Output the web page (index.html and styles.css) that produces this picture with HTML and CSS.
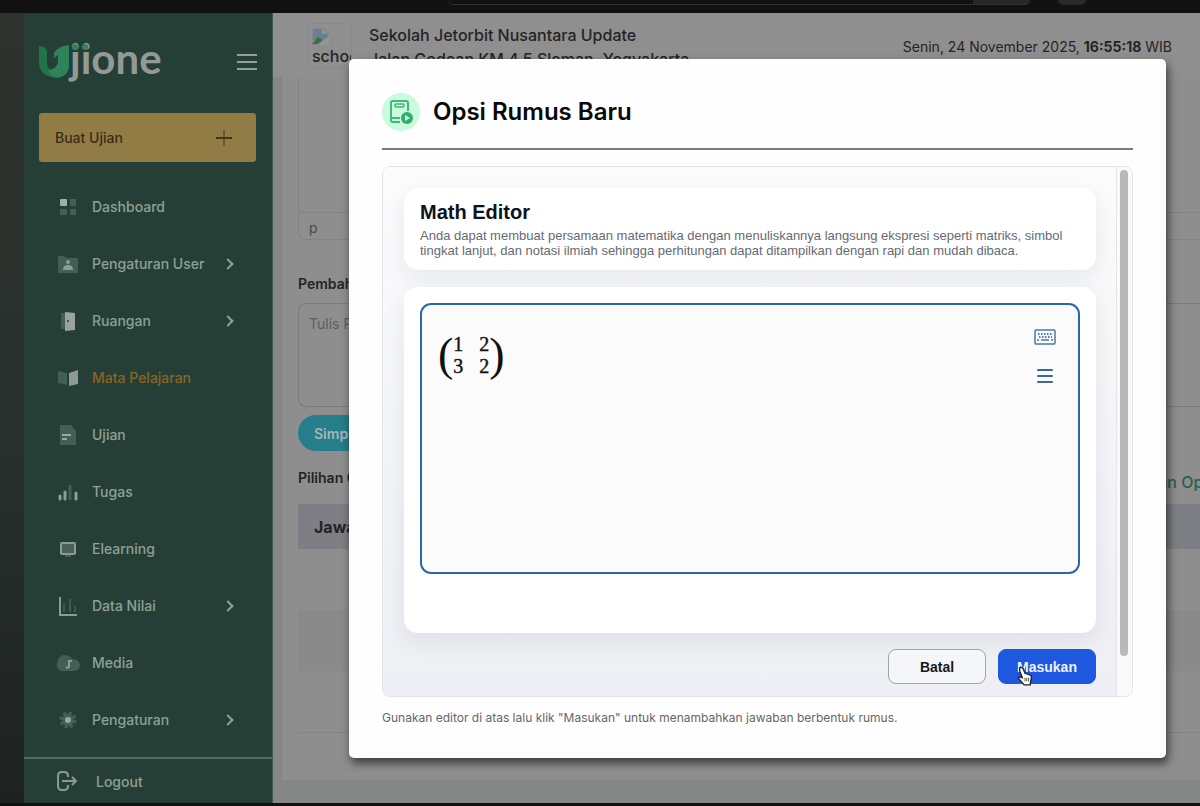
FILE: index.html
```html
<!DOCTYPE html>
<html lang="id">
<head>
  <meta charset="UTF-8" />
  <meta name="viewport" content="width=device-width, initial-scale=1.0" />
  <title>Ujione - Opsi Rumus Baru</title>
  <link rel="stylesheet" href="styles.css">
</head>
<body>
  <div class="browser-bar">
    <div class="address"></div>
    <div class="avatar"></div>
  </div>

  <div class="layout">
    <aside class="sidebar">
      <div class="brand">
        <svg class="logo" width="128" height="44" viewBox="0 0 128 44" role="img" aria-label="Ujione">
          <path d="M0 6q7 0 8 6v11q0 6 6 8l6 5q-4 2-8 1Q0 34 0 22z" fill="#21744a"/>
          <path d="M15 13q4-7 15-8v20q0 11-12 13-8-2-9-8 9-1 10-8v-7l-4 3z" fill="#2f8259"/>
          <text x="31" y="34" class="logo-text">jione</text>
          <circle cx="36" cy="7" r="3" fill="#2f8259"/>
          <circle cx="46" cy="7" r="3" fill="#2f8259"/>
        </svg>
        <button class="toggle" aria-label="Menu">
          <svg width="20" height="18" viewBox="0 0 20 18" stroke="#92a099" stroke-width="2"><path d="M0 2h20M0 9h20M0 16h20"/></svg>
        </button>
      </div>

      <button class="create">Buat Ujian
        <svg width="16" height="16" viewBox="0 0 16 16" stroke="#43341a" stroke-width="2"><path d="M0 8h16"/><path d="M8 0v16" stroke-width="1"/></svg>
      </button>

      <nav class="menu">
        <a href="#"><svg viewBox="0 0 24 24"><rect x="4" y="4" width="7" height="7" rx="1" fill="#a3ada8"/><path class="dim" d="M14 4h6v7h-6zM4 14h7v6H4zM14 14h6v6h-6z"/></svg>Dashboard</a>
        <a href="#"><svg viewBox="0 0 24 24"><path class="dim" d="M2 4h6l2 2h12v15H2z"/><circle cx="12" cy="10" r="2" fill="#8c9b94"/><path d="M7 18q0-5 5-5t5 5z" fill="#8c9b94"/></svg>Pengaturan User<i class="chevron"></i></a>
        <a href="#"><svg viewBox="0 0 24 24"><path class="dim" d="M5 4h4v16H5z"/><path d="M9 3l10 1v17l-10 1z" fill="#9ca39f"/><circle cx="12" cy="12" r="1" fill="#3b2b2b"/></svg>Ruangan<i class="chevron"></i></a>
        <a href="#" class="active"><svg viewBox="0 0 24 24"><path class="dim" d="M2 5l9 2v12l-9-2z"/><path d="M13 7l9-3v14l-9 2z" fill="#8e9994"/></svg>Mata Pelajaran</a>
        <a href="#"><svg viewBox="0 0 24 24"><path class="dim" d="M4 2h11l5 6v14H4z"/><path d="M6 12h9M6 16h5" stroke="#9aa7a0" stroke-width="2"/></svg>Ujian</a>
        <a href="#"><svg viewBox="0 0 24 24"><path d="M4 16v3M9 12v7M20 13v6" stroke="#8f9d96" stroke-width="3" stroke-linecap="round"/><path d="M14 5v15" stroke="#445e53" stroke-width="3"/></svg>Tugas</a>
        <a href="#"><svg viewBox="0 0 24 24"><rect x="5" y="6" width="14" height="11" rx="1" fill="#4a5f56" stroke="#8b9a93" stroke-width="2"/><path class="dim" d="M9 18h6v2H9z"/></svg>Elearning</a>
        <a href="#"><svg viewBox="0 0 24 24"><path d="M8 9v9M14 5v13M19 12v6" stroke="#3e594e" stroke-width="2"/><path d="M4 3v18h17" fill="none" stroke="#8b9a93" stroke-width="2"/></svg>Data Nilai<i class="chevron"></i></a>
        <a href="#"><svg viewBox="0 0 24 24"><path class="dim" d="M6 20a6 6 0 0 1-5-8Q2 5 8 4q6 0 8 4 7 0 8 6 0 5-6 6z"/><path d="M10 17l3-1v-6h3" fill="none" stroke="#8b9a93" stroke-width="2"/></svg>Media</a>
        <a href="#"><svg viewBox="0 0 24 24"><circle cx="12" cy="12" r="6" class="dim"/><circle cx="12" cy="12" r="7" fill="none" stroke="#455e54" stroke-width="3" stroke-dasharray="3.5 2"/><circle cx="12" cy="12" r="3" fill="#9aa7a0"/></svg>Pengaturan<i class="chevron"></i></a>
      </nav>

      <a href="#" class="logout">
        <svg width="24" height="24" viewBox="0 0 24 24" fill="none" stroke="#8b9a93" stroke-width="2"><path d="M13 8V7q0-4-4-4H7Q3 3 3 7v10q0 4 4 4h2q4 0 4-4v-1M7 12h14M17 8l4 4-4 4"/></svg>
        Logout
      </a>
    </aside>

    <main class="main">
      <header class="header">
        <div class="school-logo">
          <svg width="17" height="17" viewBox="0 0 17 17"><path d="M0 0h11l6 6v11H0z" fill="#8d9496" stroke="#7d8284"/><path d="M1 1h9v5h6v4L7 13l-6-1z" fill="#687f94"/><path d="M0 16l6-7 5 3-5 4z" fill="#3f7140"/><path d="M7 17l10-9v9z" fill="#939693"/></svg>
          <span>school</span>
        </div>
        <div class="school">
          <div>Sekolah Jetorbit Nusantara Update</div>
          <div>Jalan Godean KM 4.5 Sleman, Yogyakarta</div>
        </div>
        <div class="clock">Senin, 24 November 2025, <b>16:55:18</b> WIB</div>
      </header>

      <section class="content">
        <div class="editor"><div class="status">p</div></div>
        <label class="label" for="pembahasan">Pembahasan</label>
        <textarea id="pembahasan" placeholder="Tulis Pembahasan"></textarea>
        <button class="save">Simpan</button>
        <div class="option-head">
          <span>Pilihan Ganda</span>
          <a href="#">Tambahkan Opsi</a>
        </div>
        <table class="answers">
          <thead><tr><th>Jawaban</th></tr></thead>
          <tbody>
            <tr><td></td></tr>
            <tr><td></td></tr>
            <tr><td></td></tr>
          </tbody>
        </table>
      </section>
    </main>
  </div>

  <!-- Modal -->
  <div class="overlay">
    <div class="modal" role="dialog" aria-labelledby="modal-title">
      <div class="modal-head">
        <span class="modal-icon">
          <svg width="24" height="24" viewBox="0 0 24 24" fill="none" stroke="#43b67b" stroke-width="2"><path d="M19 11V3q0-2-2-2H4Q2 1 2 3v17q0 2 2 2h7M2 18h9"/><rect x="6" y="4" width="9" height="3" rx="1" stroke-width="1.5"/><circle cx="18" cy="18" r="6" fill="#2fae6c" stroke="none"/><path d="M16 15l5 3-5 3z" fill="#c9fbdc" stroke="none"/></svg>
        </span>
        <h2 id="modal-title">Opsi Rumus Baru</h2>
      </div>

      <div class="frame">
        <div class="frame-body">
          <div class="card intro">
            <h3>Math Editor</h3>
            <p>Anda dapat membuat persamaan matematika dengan menuliskannya langsung ekspresi seperti matriks, simbol tingkat lanjut, dan notasi ilmiah sehingga perhitungan dapat ditampilkan dengan rapi dan mudah dibaca.</p>
          </div>
          <div class="card field-card">
            <div class="mathfield">
              <div class="matrix">
                <span class="paren">(</span>
                <div class="cells"><span>1</span><span>2</span><span>3</span><span>2</span></div>
                <span class="paren">)</span>
              </div>
              <div class="tools">
                <button aria-label="Keyboard">
                  <svg width="22" height="16" viewBox="0 0 22 16" fill="none" stroke="#4d79a8"><rect x="1" y="1" width="20" height="14" rx="1" stroke-width="1.5"/><path d="M4 5h15M5 8h13" stroke-width="2" stroke-dasharray="1.5 1.5"/><path d="M3 11h2M7 11h8M17 11h2" stroke-width="1.5"/></svg>
                </button>
                <button aria-label="Menu">
                  <svg width="16" height="16" viewBox="0 0 16 16" stroke="#3b66a0" stroke-width="2" stroke-linecap="round"><path d="M1 2h14M1 8h14M1 14h14"/></svg>
                </button>
              </div>
            </div>
          </div>
          <div class="actions">
            <button class="cancel">Batal</button>
            <button class="submit">Masukan
              <svg class="cursor" width="16" height="20" viewBox="0 0 18 22"><path d="M3 2q2-2 4 1l2 5 6 2q2 1 1 4l-1 5v2H8l-6-7q-1-2 1-2l3 1-3-8z" fill="#fff" stroke="#222" stroke-width="1.5"/><path d="M9 13v4M11 13v4M13 13v4" stroke="#444"/></svg>
            </button>
          </div>
        </div>
        <div class="scrollbar"><div class="thumb"></div></div>
      </div>
      <p class="hint">Gunakan editor di atas lalu klik "Masukan" untuk menambahkan jawaban berbentuk rumus.</p>
    </div>
  </div>
</body>
</html>
```

FILE: styles.css
```css
* {
  box-sizing: border-box;
}

body {
  margin: 0;
  min-height: 100vh;
  display: flex;
  flex-direction: column;
  position: relative;
  font-family: Inter, sans-serif;
  background: #111;
  color: #242424;
  overflow: hidden;
}

button {
  font-family: inherit;
  cursor: pointer;
}

a {
  text-decoration: none;
}

.browser-bar {
  height: 13px;
  display: flex;
  gap: 28px;
  padding-left: 448px;
}

.address {
  width: 582px;
  height: 5px;
  border-bottom: 1px solid #333;
  border-radius: 0 0 12px 12px;
  background: linear-gradient(to right, #111 525px, #272727 525px);
}

.avatar {
  width: 28px;
  height: 5px;
  border-radius: 0 0 14px 14px;
  background: #292929;
}

.layout {
  flex: 1;
  display: flex;
  padding-left: 24px;
  border-bottom: 3px solid #111;
  background: linear-gradient(#2f322e, #29302d 50%, #1e2321);
}

/* Sidebar */
.sidebar {
  width: 249px;
  flex-shrink: 0;
  display: flex;
  flex-direction: column;
  background: #253f36;
  border-right: 1px solid #3d5a50;
}

.brand {
  display: flex;
  justify-content: space-between;
  align-items: center;
  padding: 27px 15px 0;
}

.logo-text {
  font-family: Lato, sans-serif;
  font-size: 42px;
  font-weight: 700;
  fill: #929a97;
}

.toggle {
  padding: 0;
  border: none;
  background: none;
  line-height: 0;
}

.create {
  margin: 29px 16px 0 15px;
  height: 49px;
  display: flex;
  justify-content: space-between;
  align-items: center;
  padding: 0 24px 0 16px;
  border: none;
  border-radius: 3px;
  background: #917c45;
  color: #3a2d17;
  font-size: 14px;
  font-weight: 500;
}

.menu {
  padding-top: 16px;
}

.menu a {
  height: 57px;
  display: flex;
  align-items: center;
  gap: 12px;
  padding: 0 40px 0 32px;
  color: #8fa098;
  font-size: 14px;
  font-weight: 500;
}

.menu svg {
  width: 24px;
  height: 24px;
}

.menu .dim {
  fill: #455e54;
}

.menu .active {
  color: #8b6424;
}

.chevron {
  width: 8px;
  height: 8px;
  margin-left: auto;
  border: solid #8fa098;
  border-width: 2px 2px 0 0;
  transform: rotate(45deg);
}

.logout {
  flex: 1;
  display: flex;
  align-items: center;
  gap: 17px;
  margin-top: 9px;
  padding-left: 31px;
  border-top: 2px solid #4d6f61;
  color: #8fa098;
  font-size: 14px;
  font-weight: 500;
}

/* Page behind the modal */
.main {
  flex: 1;
  min-width: 0;
  display: flex;
  flex-direction: column;
  background: #848786;
}

.header {
  height: 64px;
  flex-shrink: 0;
  display: flex;
  align-items: flex-start;
  padding: 10px 28px 0 34px;
  background: #8f8f8f;
}

.school-logo {
  width: 45px;
  height: 46px;
  padding: 4px;
  overflow: hidden;
  border: 1px solid #898989;
  border-radius: 4px;
  font-size: 16px;
  font-weight: 500;
  line-height: 22px;
}

.school-logo svg,
.school-logo span {
  display: block;
}

.school {
  flex: 1;
  margin-left: 17px;
  font-size: 16px;
  font-weight: 500;
  line-height: 24px;
  white-space: nowrap;
}

.clock {
  padding-top: 14px;
  font-size: 14px;
  line-height: 20px;
}

.content {
  flex: 1;
  margin: 0 0 23px 9px;
  padding-left: 16px;
  background: #8e8e8e;
}

.editor {
  height: 163px;
  display: flex;
  align-items: flex-end;
  border: 1px solid #838383;
  border-width: 0 0 1px 1px;
  border-radius: 0 0 0 8px;
}

.status {
  flex: 1;
  height: 27px;
  padding: 5px 10px;
  border-top: 1px solid #838383;
  font-size: 14px;
  line-height: 20px;
  color: #4a4a4a;
}

.label {
  display: block;
  margin: 34px 0 9px;
  font-size: 14px;
  font-weight: 600;
  line-height: 20px;
}

textarea {
  display: block;
  width: 100%;
  height: 104px;
  padding: 10px;
  border: 1px solid #7c7c7c;
  border-right: none;
  border-radius: 8px 0 0 8px;
  background: none;
  font: 14px/20px Inter, sans-serif;
  resize: none;
}

textarea::placeholder {
  color: #5d5d5d;
}

.save {
  height: 36px;
  margin-top: 8px;
  padding: 0 16px;
  border: none;
  border-radius: 18px;
  background: #257e8a;
  color: #a9b6b8;
  font-size: 14px;
  font-weight: 600;
}

.option-head {
  display: flex;
  justify-content: space-between;
  align-items: center;
  height: 53px;
  margin-right: -16px;
  font-size: 14px;
  font-weight: 600;
}

.option-head a {
  padding-top: 8px;
  color: #24634b;
  font-size: 16px;
  font-weight: 500;
  white-space: nowrap;
}

.answers {
  width: 100%;
  border-collapse: collapse;
}

.answers th {
  height: 45px;
  padding: 0 16px;
  background: #7d7f84;
  font-size: 16px;
  text-align: left;
}

.answers td {
  height: 61px;
  padding: 0;
}

.answers tr:nth-child(even) td {
  background: #8a8a8a;
}

.answers tr:last-child td {
  border-bottom: 1px solid #838383;
}

/* Modal */
.overlay {
  position: absolute;
  inset: 0;
  padding: 59px 34px 48px 349px;
}

.modal {
  min-height: 699px;
  padding: 31px 33px 0;
  border-radius: 5px;
  background: #fefefe;
  box-shadow: 2px 5px 10px rgba(0, 0, 0, 0.6);
}

.modal-head {
  display: flex;
  align-items: center;
  gap: 13px;
  padding-bottom: 15px;
  border-bottom: 2px solid #777a82;
}

.modal-icon {
  width: 38px;
  height: 38px;
  display: flex;
  align-items: center;
  justify-content: center;
  border-radius: 50%;
  background: #c9fbdc;
}

.modal-head h2 {
  margin: 0;
  font-size: 24px;
  font-weight: 600;
  line-height: 43px;
  color: #090909;
}

.frame {
  display: flex;
  margin-top: 16px;
  border: 1px solid #e3e4e7;
  border-radius: 8px;
  overflow: hidden;
  font-family: "Liberation Sans", Arial, sans-serif;
}

.frame-body {
  flex: 1;
  padding: 21px 20px 12px 21px;
  background: linear-gradient(#fcfcfd, #edeff4);
}

.card {
  padding: 16px;
  border-radius: 14px;
  background: #fff;
  box-shadow: 0 8px 24px rgba(15, 23, 42, 0.08);
}

.intro {
  padding: 12px 16px;
}

.intro h3 {
  margin: 0 0 4px;
  font-size: 20px;
  line-height: 24px;
  color: #0d1220;
}

.intro p {
  margin: 0;
  font-size: 13px;
  line-height: 15px;
  color: #666a73;
}

.field-card {
  margin-top: 17px;
  padding-bottom: 59px;
}

.mathfield {
  height: 271px;
  display: flex;
  justify-content: space-between;
  padding: 24px 22px 0 16px;
  border: 2px solid #2b66b1;
  border-radius: 11px;
  background: #fbfbfb;
}

.matrix {
  display: flex;
  height: 52px;
  align-items: center;
  font-family: "Liberation Serif", serif;
  color: #111;
}

.paren {
  font-size: 46px;
  line-height: 46px;
}

.cells {
  display: grid;
  grid-template-columns: 10px 10px;
  column-gap: 16px;
  font-size: 20px;
  line-height: 22px;
  -webkit-text-stroke: 0.4px #111;
}

.tools {
  display: flex;
  flex-direction: column;
  align-items: center;
  gap: 23px;
}

.tools button {
  height: 16px;
  padding: 0;
  border: none;
  background: none;
  line-height: 0;
}

.actions {
  display: flex;
  justify-content: flex-end;
  gap: 12px;
  margin-top: 16px;
}

.actions button {
  position: relative;
  width: 98px;
  height: 35px;
  border: 1px solid #a2a4a9;
  border-radius: 8px;
  background: #f5f6f8;
  color: #18191c;
  font-size: 14px;
  font-weight: 700;
}

.actions .submit {
  border-color: #1d58df;
  background: #1d58df;
  color: #eef3ff;
}

.cursor {
  position: absolute;
  left: 18px;
  top: 16px;
}

.scrollbar {
  width: 16px;
  padding: 3px;
  border-left: 1px solid #e6e6e8;
  background: #fafafa;
}

.thumb {
  width: 8px;
  height: 486px;
  border-radius: 4px;
  background: #b9b9b9;
}

.hint {
  margin: 11px 0 0;
  font-size: 12px;
  line-height: 20px;
  color: #666;
}
```
